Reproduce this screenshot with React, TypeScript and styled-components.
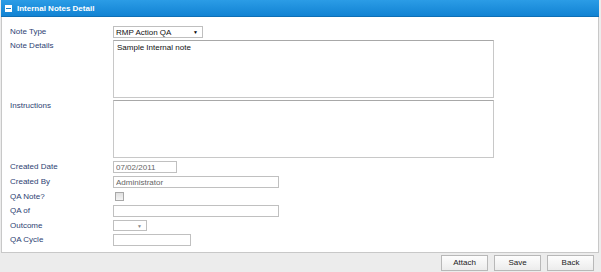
import styled, { createGlobalStyle } from "styled-components";

const Global = createGlobalStyle`
  html, body {
    margin: 0;
    padding: 0;
    background: #ececec;
    font-family: "Liberation Sans", Arial, sans-serif;
  }
`;

export default function App() {
  return (
    <Page>
      <Global />
      <Panel>
        <Header>
          <Toggle />
          Internal Notes Detail
        </Header>
        <Body>
          <Grid gap={2}>
            <Label>Note Type</Label>
            <Select width={90} height={12}>
              RMP Action QA
              <Arrow>▼</Arrow>
            </Select>

            <Label>Note Details</Label>
            <TextArea defaultValue="Sample Internal note" />

            <Label>Instructions</Label>
            <TextArea defaultValue="" />
          </Grid>

          <Grid gap={3}>
            <Label>Created Date</Label>
            <Input width={64} defaultValue="07/02/2011" muted />

            <Label>Created By</Label>
            <Input width={166} defaultValue="Administrator" muted />

            <Label>QA Note?</Label>
            <CheckCell>
              <Check />
            </CheckCell>

            <Label>QA of</Label>
            <Input width={166} defaultValue="" />

            <Label>Outcome</Label>
            <Select width={34} height={11}>
              <Arrow light>▼</Arrow>
            </Select>

            <Label>QA Cycle</Label>
            <Input width={78} defaultValue="" />
          </Grid>
        </Body>
      </Panel>
      <Footer>
        <Button>Attach</Button>
        <Button>Save</Button>
        <Button>Back</Button>
      </Footer>
    </Page>
  );
}

const Page = styled.div`
  width: 601px;
  height: 272px;
  display: flex;
  flex-direction: column;
  background: #ececec;
  overflow: hidden;
`;

const Panel = styled.div`
  width: 598px;
  height: 253px;
  display: flex;
  flex-direction: column;
  background: #fff;
  border-left: 1px solid #c8c8c8;
  border-right: 1px solid #c8c8c8;
  border-bottom: 1px solid #c8c8c8;
  box-sizing: border-box;
  margin-left: 1px;
`;

const Header = styled.div`
  height: 16px;
  display: flex;
  align-items: center;
  gap: 5px;
  padding-left: 4px;
  margin-left: -1px;
  margin-right: -1px;
  background: linear-gradient(#2b9ce6, #1283d3);
  color: #fff;
  font-weight: bold;
  font-size: 8px;
  border-bottom: 1px solid #0e6fb5;
`;

const Toggle = styled.span`
  width: 7px;
  height: 7px;
  background: #fff;
  position: relative;
  &::after {
    content: "";
    position: absolute;
    left: 1px;
    right: 1px;
    top: 3px;
    height: 1px;
    background: #1a80c8;
  }
`;

const Body = styled.div`
  display: flex;
  flex-direction: column;
  gap: 3px;
  padding: 9px 0 0 8px;
`;

const Grid = styled.div<{ gap: number }>`
  display: grid;
  grid-template-columns: 103px auto;
  justify-content: start;
  align-items: start;
  row-gap: ${(p) => p.gap}px;
`;

const Label = styled.div`
  font-size: 8px;
  line-height: 11px;
  color: #2e3f73;
`;

const Select = styled.div<{ width: number; height: number }>`
  width: ${(p) => p.width}px;
  height: ${(p) => p.height}px;
  box-sizing: border-box;
  border: 1px solid #bfbfbf;
  display: flex;
  align-items: center;
  justify-content: space-between;
  padding: 0 4px 0 2px;
  font-size: 8px;
  color: #111;
  background: #fff;
`;

const Arrow = styled.span<{ light?: boolean }>`
  font-size: 5px;
  color: ${(p) => (p.light ? "#888" : "#000")};
  margin-left: auto;
`;

const TextArea = styled.textarea`
  width: 381px;
  height: 58px;
  box-sizing: border-box;
  border: 1px solid #c8c8c8;
  border-top-color: #a8a8a8;
  padding: 2px 3px;
  font-family: "Liberation Sans", Arial, sans-serif;
  font-size: 8px;
  color: #111;
  resize: none;
  margin: 0;
  display: block;
  outline: none;
`;

const Input = styled.input<{ width: number; muted?: boolean }>`
  width: ${(p) => p.width}px;
  height: 12px;
  box-sizing: border-box;
  border: 1px solid #c0c0c0;
  padding: 0 2px;
  margin: 0;
  font-family: "Liberation Sans", Arial, sans-serif;
  font-size: 8px;
  color: ${(p) => (p.muted ? "#666" : "#000")};
  display: block;
  outline: none;
`;

const CheckCell = styled.div`
  height: 10px;
  display: flex;
  align-items: center;
  padding-left: 2px;
`;

const Check = styled.span`
  width: 7px;
  height: 7px;
  border: 1px solid #a8a8a8;
  background: linear-gradient(#e0e0e0, #f4f4f4);
`;

const Footer = styled.div`
  flex: 1;
  display: flex;
  justify-content: flex-end;
  align-items: center;
  gap: 6px;
  padding-right: 7px;
`;

const Button = styled.div`
  width: 47px;
  height: 16px;
  box-sizing: border-box;
  border: 1px solid #b8b8b8;
  background: linear-gradient(#fdfdfd, #ececec);
  display: flex;
  align-items: center;
  justify-content: center;
  font-size: 8px;
  color: #222;
`;
